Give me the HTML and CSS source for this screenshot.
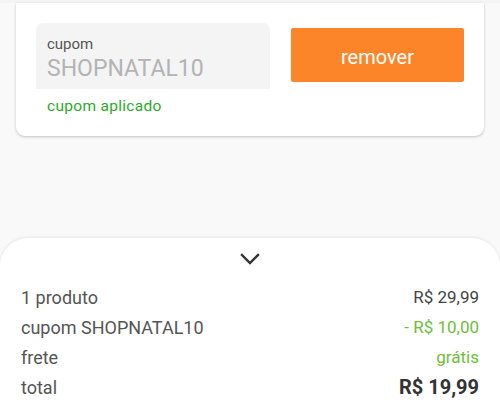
FILE: index.html
```html
<!DOCTYPE html>
<html lang="pt-BR">
<head>
<meta charset="utf-8">
<link rel="stylesheet" href="styles.css">
</head>
<body>
<div class="page">
  <div class="top-strip"></div>
  <section class="card">
    <div class="coupon-row">
      <div class="field-wrap">
        <div class="field">
          <span class="field-label">cupom</span>
          <span class="field-value">SHOPNATAL10</span>
        </div>
        <div class="field-help">cupom aplicado</div>
      </div>
      <button class="btn-remove">remover</button>
    </div>
  </section>
  <div class="spacer"></div>
  <section class="sheet">
    <div class="sheet-handle">
      <svg width="20" height="12" viewBox="0 0 20 12"><path d="M2 2 L10 10 L18 2" fill="none" stroke="#333" stroke-width="2.4" stroke-linecap="square"/></svg>
    </div>
    <div class="rows">
      <div class="row"><span>1 produto</span><span class="value">R$ 29,99</span></div>
      <div class="row"><span>cupom SHOPNATAL10</span><span class="value green">- R$ 10,00</span></div>
      <div class="row"><span>frete</span><span class="value green">grátis</span></div>
      <div class="row total"><span>total</span><span class="total-value">R$ 19,99</span></div>
    </div>
  </section>
</div>
</body>
</html>
```
FILE: styles.css
```css
* { box-sizing: border-box; }
html, body { margin: 0; padding: 0; }
body {
  background: #f9f9f9;
  font-family: Roboto, "Liberation Sans", sans-serif;
  width: 500px;
  height: 407px;
  overflow: hidden;
}
.page {
  display: flex;
  flex-direction: column;
  height: 407px;
}
.top-strip {
  height: 3px;
  background: #f4f4f4;
}
.card {
  margin: 0 16px;
  background: #fff;
  border-radius: 0 0 9px 9px;
  box-shadow: 0 1px 3px rgba(0,0,0,0.22);
  padding: 20px 20px 19px 20px;
}
.coupon-row {
  display: flex;
  gap: 21px;
  align-items: flex-start;
}
.field-wrap {
  width: 234px;
  flex: none;
}
.field {
  height: 66px;
  background: #f4f4f4;
  border-radius: 7px 7px 0 0;
  padding: 11px 11px 0 11px;
  display: flex;
  flex-direction: column;
}
.field-label {
  font-size: 15px;
  color: #555;
  line-height: 20px;
}
.field-value {
  font-size: 23px;
  color: #b3b3b3;
  line-height: 30px;
  margin-top: 0;
}
.field-help {
  font-size: 15.5px;
  color: #2aaa2a;
  padding: 6px 0 0 11px;
  line-height: 22px;
  letter-spacing: 0.3px;
}
.btn-remove {
  margin-top: 5px;
  width: 173px;
  height: 54px;
  flex: none;
  border: none;
  border-radius: 2px;
  background: #fc852a;
  color: #fff;
  font-family: Roboto, "Liberation Sans", sans-serif;
  font-size: 20px;
  padding: 3px 0 0 0;
}
.spacer { flex: 1; }
.sheet {
  height: 169px;
  background: #fff;
  border-radius: 28px 28px 0 0;
  box-shadow: 0 -1px 3px rgba(0,0,0,0.08);
  display: flex;
  flex-direction: column;
}
.sheet-handle {
  display: flex;
  justify-content: center;
  padding-top: 15px;
  height: 44px;
}
.rows {
  padding: 0 21px 0 21px;
  display: flex;
  flex-direction: column;
}
.row {
  display: flex;
  justify-content: space-between;
  align-items: center;
  height: 30px;
  font-size: 18px;
  color: #555;
}
.value { font-size: 17px; color: #444; }
.value.green { color: #6cbf3c; }
.total-value {
  font-weight: bold;
  font-size: 20px;
  color: #333;
}
```
